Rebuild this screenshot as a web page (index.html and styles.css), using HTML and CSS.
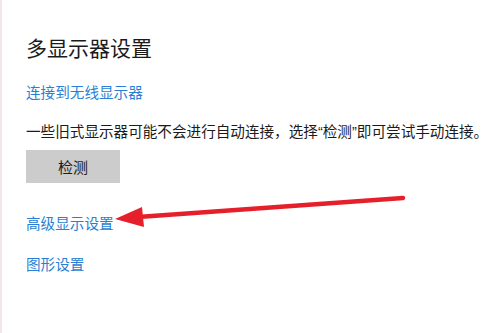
FILE: index.html
```html
<!DOCTYPE html>
<html lang="zh-CN">
<head>
    <meta charset="UTF-8">
    <meta name="viewport" content="width=device-width, initial-scale=1.0">
    <title>多显示器设置</title>
    <link rel="stylesheet" href="styles.css">
</head>
<body>
    <main class="settings">
        <h1 class="settings-title">多显示器设置</h1>
        <a href="#" class="settings-link link-wireless">连接到无线显示器</a>
        <p class="settings-desc">一些旧式显示器可能不会进行自动连接，选择<span class="quote">“</span>检测<span class="quote">”</span>即可尝试手动连接。</p>
        <button class="detect-btn">检测</button>
        <a href="#" class="settings-link link-advanced">高级显示设置</a>
        <a href="#" class="settings-link link-graphics">图形设置</a>

        <svg class="arrow" width="500" height="333" viewBox="0 0 500 333">
            <line x1="403" y1="198" x2="138" y2="217" stroke="#e5202a" stroke-width="4.5" stroke-linecap="round"/>
            <polygon points="115,219 142,207 144,227" fill="#e5202a"/>
        </svg>
    </main>
</body>
</html>
```

FILE: styles.css
```css
body, html {
    margin: 0;
    padding: 0;
    background-color: #fff;
    font-family: "Noto Sans CJK SC", "Noto Sans", sans-serif;
}

.settings {
    position: relative;
    height: 333px;
    box-sizing: border-box;
    padding: 33px 0 0 26px;
    border-left: 2px solid #f4e6e6;
    display: flex;
    flex-direction: column;
    align-items: flex-start;
    overflow: hidden;
}

.settings-title {
    margin: 0 0 0 -2px;
    font-size: 21px;
    line-height: 28px;
    font-weight: normal;
    color: #1b1b1b;
}

.settings-link {
    margin-left: -2px;
    font-size: 14.6px;
    line-height: 20px;
    color: #2a7fd4;
    text-decoration: none;
}

.link-wireless {
    margin-top: 21px;
}

.settings-desc {
    margin: 19px 0 0 -2px;
    font-size: 14.6px;
    line-height: 20px;
    color: #1b1b1b;
    white-space: nowrap;
}

.quote {
    font-family: "Liberation Sans", sans-serif;
}

.detect-btn {
    margin: 8px 0 0 -2px;
    width: 94px;
    height: 33px;
    border: none;
    background-color: #cccccc;
    font-family: inherit;
    font-size: 15px;
    color: #1b1b1b;
    padding: 0;
}

.link-advanced {
    margin-top: 30px;
}

.link-graphics {
    margin-top: 21px;
}

.arrow {
    position: absolute;
    left: -2px;
    top: 0;
    pointer-events: none;
}
```
